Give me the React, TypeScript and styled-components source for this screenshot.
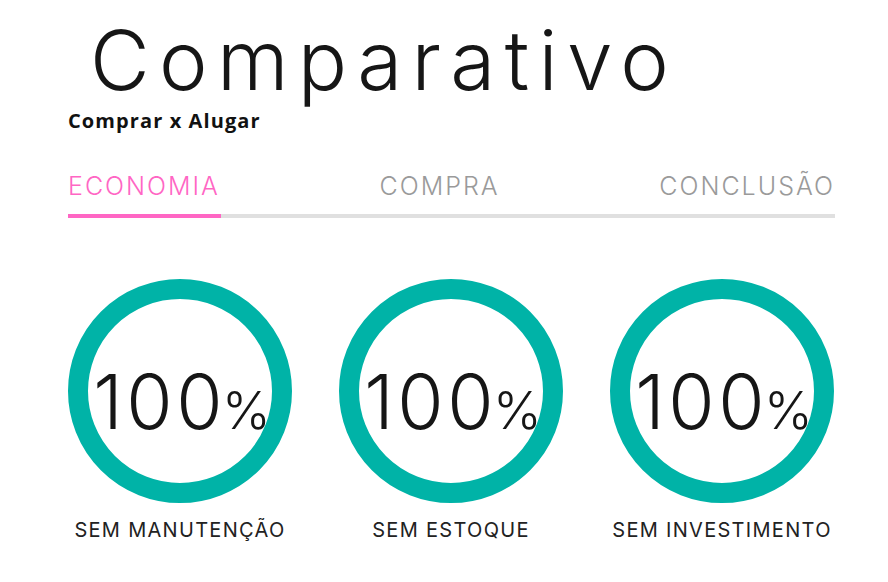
import React from "react";
import styled, { createGlobalStyle } from "styled-components";

const Global = createGlobalStyle`
  html, body { margin: 0; padding: 0; background: #ffffff; }
  body { font-family: "Inter", "Open Sans", sans-serif; color: #1a1a1a; }
`;

const Page = styled.div`
  width: 888px;
  height: 582px;
  box-sizing: border-box;
  padding: 0 53px 0 68px;
  overflow: hidden;
`;

const Title = styled.h1`
  margin: 0;
  padding: 13px 0 0 22px;
  font-family: "Inter", sans-serif;
  font-weight: 300;
  font-size: 82px;
  line-height: 96px;
  letter-spacing: 9.3px;
  color: #161616;
`;

const Subtitle = styled.h2`
  margin: 0;
  font-family: "Open Sans", sans-serif;
  font-weight: 700;
  font-size: 20px;
  line-height: 24px;
  letter-spacing: 1.1px;
  color: #111;
`;

const Tabs = styled.div`
  margin-top: 38px;
`;

const TabRow = styled.div`
  display: flex;
  justify-content: space-between;
`;

const Tab = styled.span<{ $active?: boolean }>`
  font-family: "Inter", sans-serif;
  font-weight: 300;
  font-size: 25px;
  line-height: 30px;
  letter-spacing: 2px;
  color: ${(p) => (p.$active ? "#ff66c4" : "#9a9a9a")};
`;

const Track = styled.div`
  margin-top: 13px;
  height: 4px;
  background: #e0e0e0;
  display: flex;
`;

const Fill = styled.div`
  background: #ff66c4;
  height: 100%;
`;

const Stats = styled.div`
  margin-top: 61px;
  display: flex;
  gap: 47px;
`;

const Stat = styled.div`
  width: 224px;
  display: flex;
  flex-direction: column;
  align-items: center;
`;

const Ring = styled.div`
  width: 224px;
  height: 224px;
  box-sizing: border-box;
  border: 20px solid #00b3a7;
  border-radius: 50%;
  display: flex;
  align-items: center;
  justify-content: center;
`;

const Value = styled.div`
  font-family: "Inter", sans-serif;
  font-weight: 300;
  color: #161616;
  display: flex;
  align-items: baseline;
  margin-top: 20px;
  margin-left: 4px;
`;

const Num = styled.span`
  font-size: 75px;
  letter-spacing: 3.5px;
`;

const Pct = styled.span`
  font-size: 52px;
  margin-left: -4px;
`;

const Label = styled.div`
  margin-top: 15px;
  font-family: "Inter", sans-serif;
  font-weight: 400;
  font-size: 20px;
  line-height: 24px;
  letter-spacing: 1.3px;
  color: #222;
  white-space: nowrap;
`;

const stats = ["SEM MANUTENÇÃO", "SEM ESTOQUE", "SEM INVESTIMENTO"];

export default function App() {
  return (
    <Page>
      <Global />
      <Title>Comparativo</Title>
      <Subtitle>Comprar x Alugar</Subtitle>
      <Tabs>
        <TabRow>
          <Tab $active>ECONOMIA</Tab>
          <Tab>COMPRA</Tab>
          <Tab>CONCLUSÃO</Tab>
        </TabRow>
        <Track>
          <Fill style={{ width: "20%" }} />
        </Track>
      </Tabs>
      <Stats>
        {stats.map((s) => (
          <Stat key={s}>
            <Ring>
              <Value>
                <Num>100</Num>
                <Pct>%</Pct>
              </Value>
            </Ring>
            <Label>{s}</Label>
          </Stat>
        ))}
      </Stats>
    </Page>
  );
}
